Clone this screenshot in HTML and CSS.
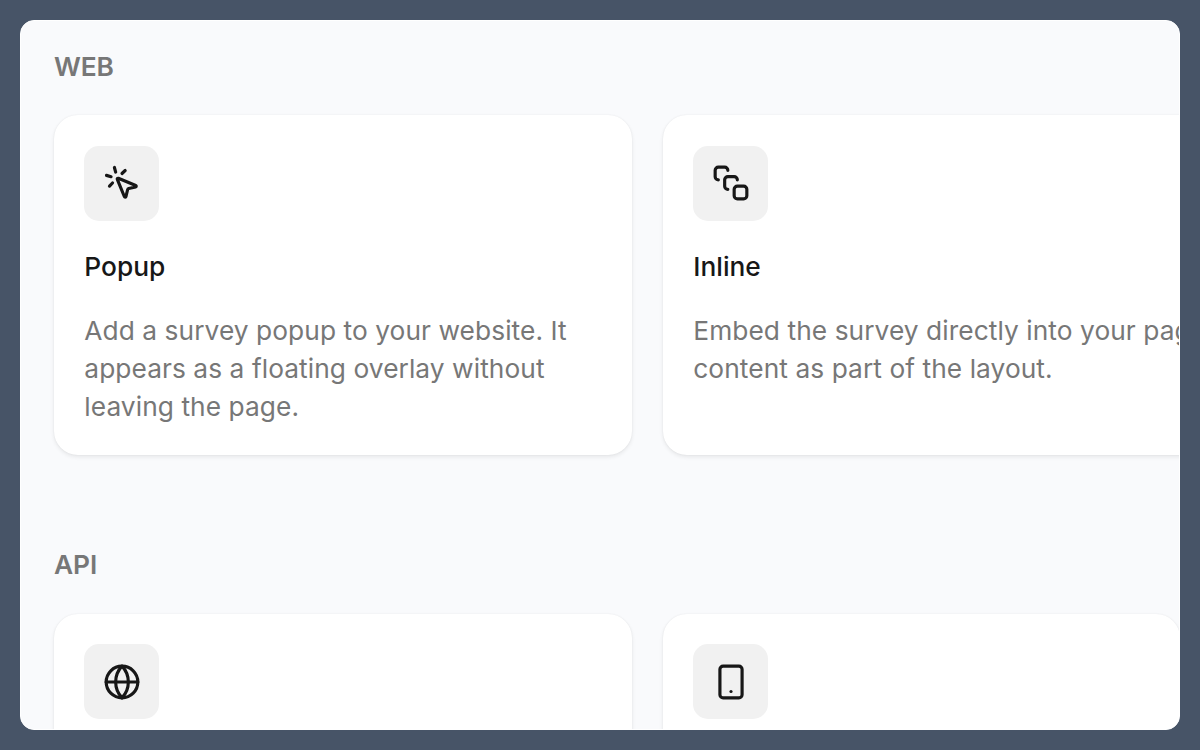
FILE: index.html
```html
<!DOCTYPE html>
<html lang="en">

<head>
    <meta charset="utf-8">
    <title>Survey channels</title>
    <link rel="stylesheet" href="styles.css">
</head>

<body>

    <main class="panel">
        <section class="group">
            <h2>WEB</h2>
            <div class="cards">
                <article class="card">
                    <div class="icon">
                        <svg viewBox="0 0 24 24">
                            <path d="M14 4.1 12 6" />
                            <path d="m5.1 8-2.9-.8" />
                            <path d="m6 12-1.9 2" />
                            <path d="M7.2 2.2 8 5.1" />
                            <path d="M9.037 9.69a.498.498 0 0 1 .653-.653l11 4.5a.5.5 0 0 1-.074.949l-4.349 1.041a1 1 0 0 0-.74.739l-1.04 4.35a.5.5 0 0 1-.95.074z" />
                        </svg>
                    </div>
                    <h3>Popup</h3>
                    <p>Add a survey popup to your website. It appears as a floating overlay without leaving the page.</p>
                </article>
                <article class="card wide">
                    <div class="icon">
                        <svg viewBox="0 0 24 24">
                            <path d="M4 10c-1.1 0-2-.9-2-2V4c0-1.1.9-2 2-2h4c1.1 0 2 .9 2 2" />
                            <path d="M10 16c-1.1 0-2-.9-2-2v-4c0-1.1.9-2 2-2h4c1.1 0 2 .9 2 2" />
                            <rect width="8" height="8" x="14" y="14" rx="2" />
                        </svg>
                    </div>
                    <h3>Inline</h3>
                    <p>Embed the survey directly into your page content as part of the layout.</p>
                </article>
            </div>
        </section>

        <section class="group">
            <h2>API</h2>
            <div class="cards">
                <article class="card">
                    <div class="icon">
                        <svg viewBox="0 0 24 24">
                            <circle cx="12" cy="12" r="10" />
                            <path d="M12 2a14.5 14.5 0 0 0 0 20 14.5 14.5 0 0 0 0-20" />
                            <path d="M2 12h20" />
                        </svg>
                    </div>
                </article>
                <article class="card narrow">
                    <div class="icon">
                        <svg viewBox="0 0 24 24">
                            <rect width="14" height="20" x="5" y="2" rx="2" />
                            <path d="M12 18h.01" />
                        </svg>
                    </div>
                </article>
            </div>
        </section>
    </main>

</body>

</html>
```

FILE: styles.css
```css
* {
    box-sizing: border-box;
}

body {
    margin: 0;
    height: 100vh;
    padding: 20px;
    background: #475467;
    font-family: Inter, "Liberation Sans", sans-serif;
    overflow: hidden;
}

.panel {
    height: 710px;
    padding: 27px 0 0 33px;
    border: 1px solid #fff;
    border-radius: 14px;
    background: #f9fafc;
    overflow: hidden;
}

/* Section with its heading */
.group {
    margin-bottom: 91px;
}

.group h2 {
    margin: 0 0 29.4px;
    font-size: 26.3px;
    font-weight: 600;
    line-height: 38px;
    letter-spacing: -.1px;
    color: #777;
}

.cards {
    display: flex;
    gap: 30.7px;
}

/* Cards */
.card {
    flex: none;
    width: 578.3px;
    height: 340px;
    padding: 30.6px 30.3px;
    border-radius: 24px;
    background: #fff;
    box-shadow: 0 0 2px rgba(0, 0, 0, .06), 0 2px 4px rgba(0, 0, 0, .08);
}

.card.wide {
    width: 600px;
}

.card.narrow {
    width: 517px;
}

.icon {
    display: flex;
    align-items: center;
    justify-content: center;
    width: 75px;
    height: 75px;
    border-radius: 15px;
    background: #f1f1f1;
}

.icon svg {
    width: 38px;
    height: 38px;
    fill: none;
    stroke: #171717;
    stroke-width: 2;
    stroke-linecap: round;
    stroke-linejoin: round;
}

.card h3 {
    margin: 27px 0 26px;
    font-size: 26.3px;
    font-weight: 500;
    line-height: 38px;
    color: #171717;
}

.card p {
    margin: 0;
    font-size: 26.3px;
    line-height: 38px;
    letter-spacing: .07px;
    color: #777;
}
```
